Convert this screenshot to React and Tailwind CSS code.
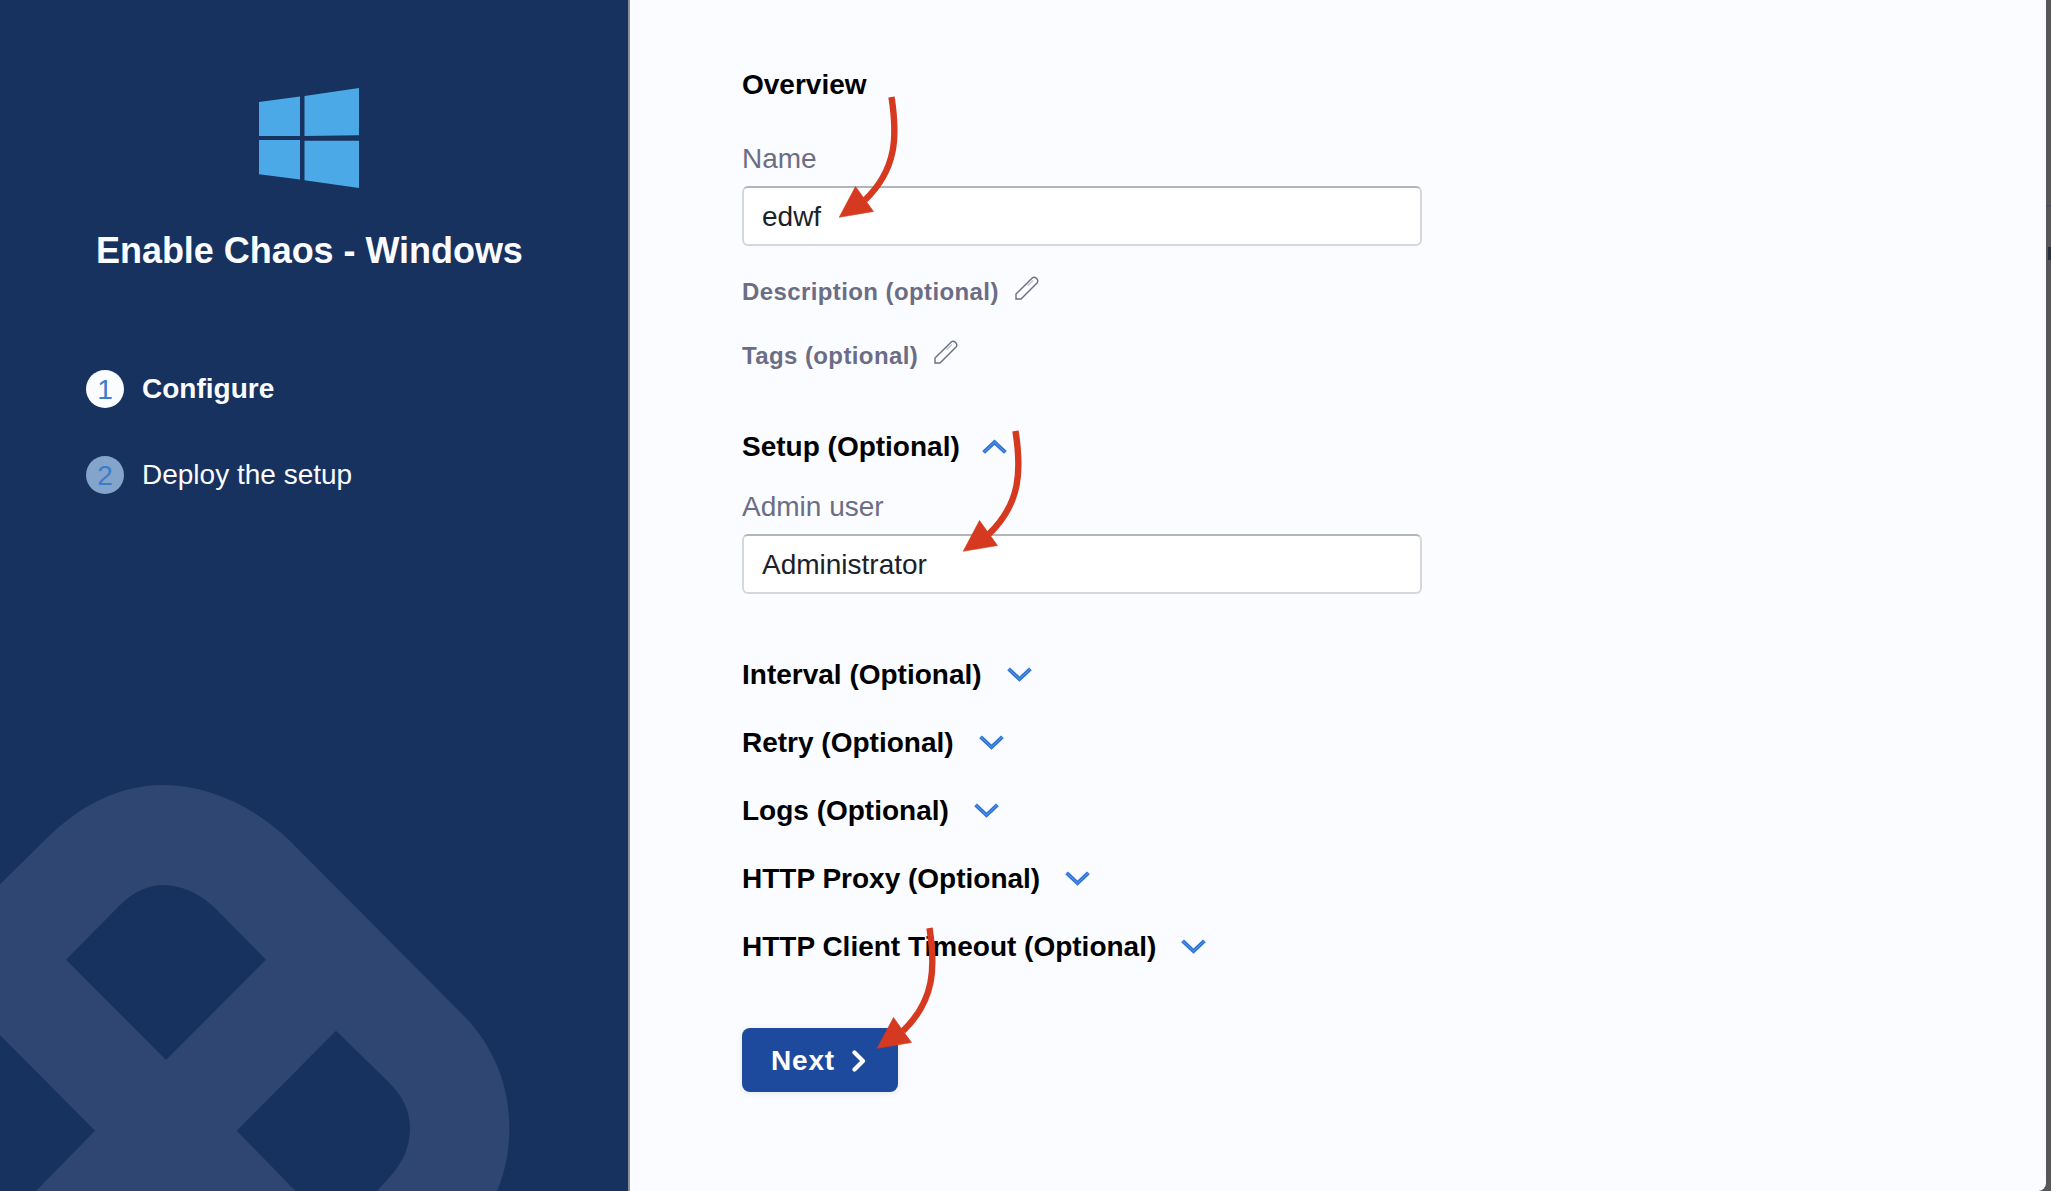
const ARROW_HEAD = "M-0.8 0.3 L15.500 -30.500 L33.500 -5.500 Z";

function Arrow({ className }) {
  return (
    <svg className={`absolute pointer-events-none ${className}`} width="70" height="130" viewBox="-5 -125 70 130" aria-hidden="true">
      <path d="M51.5 -120 C57.5 -81 57 -48 25 -17" fill="none" stroke="#d5391f" strokeWidth="6.400" />
      <path d={ARROW_HEAD} fill="#d5391f" stroke="#d5391f" strokeWidth="0.6" />
    </svg>
  );
}

function Chevron({ up, className = "" }) {
  const d = up ? "M1.6 13.4 L12.5 3.2 L23.4 13.4" : "M1.6 1.9 L12.5 12.1 L23.4 1.9";
  return (
    <svg width="25" height="15" viewBox="0 0 25 15" fill="none" className={className} aria-hidden="true">
      <path d={d} stroke="#2d74d6" strokeWidth="4" />
      <path d={d} stroke="#79a8ea" strokeWidth="0.7" />
    </svg>
  );
}

function Pencil() {
  return (
    <svg width="24" height="24" viewBox="0 0 24 24" fill="none" className="relative -top-[4px]" aria-hidden="true">
      <path d="M1 23 V18 L17 2.2 Q19 0.4 21 2 L22 3 Q23.6 5 22 7 L6 23 Z" stroke="#6b6d85" strokeWidth="1.4" />
      <path d="M12.5 9.5 L18 4.5" stroke="#c4c5d0" strokeWidth="1.6" />
    </svg>
  );
}

function WindowsLogo() {
  return (
    <svg width="100" height="100" viewBox="0 0 100 100" fill="#4ca9e8" className="ml-[259px] block" aria-hidden="true">
      <path d="M0 14 L41 8.6 V48 H0 Z" />
      <path d="M45.5 7.9 L100 0 V47.3 L45.5 48 Z" />
      <path d="M0 52 H41 V91.4 L0 86.2 Z" />
      <path d="M45.5 52.7 H100 V100 L45.5 92.2 Z" />
    </svg>
  );
}

function Watermark() {
  return (
    <svg className="absolute left-0 bottom-0" width="628" height="431" viewBox="0 760 628 431" aria-hidden="true">
      <path
        fill="#2f4672"
        fillRule="evenodd"
        d="M0 884.3 L45 840 C82 803 122 785 163 785 C205 785 252 804 290 841 L461 1013 C493 1044 509.4 1085 509.4 1128 C509.4 1150 505.500 1171 497 1191 H377 L388 1179 C403 1163 410 1147 410 1128 C410 1110 402 1095 388 1081.500 L336 1030.700 L236.700 1130.700 L295.500 1191 H36 L95 1130.700 L0 1035 Z M66 959.700 L120 905 C133 892 148 885 163 885 C181 885 200 893 216 909 L266 959.700 L166 1060 Z"
      />
    </svg>
  );
}

function Step({ number, label, active }) {
  return (
    <li className="flex h-[38px] items-center gap-[18px]">
      <span
        className={`flex size-[38px] items-center justify-center rounded-full pt-[2px] text-[28px] leading-none text-[#3d7bcb] ${
          active ? "bg-[#fbfcff]" : "bg-[#83a4cb]"
        }`}
      >
        {number}
      </span>
      <span className={`text-[28px] leading-[38px] text-[#fbfcff] ${active ? "font-bold" : ""}`}>{label}</span>
    </li>
  );
}

function TextField({ label, value }) {
  return (
    <label className="block">
      <span className="block text-[28px] leading-8 text-[#6b6d85]">{label}</span>
      <input
        defaultValue={value}
        className="mt-[11px] block h-[60px] w-[680px] rounded-[6px] border-2 border-[#d6d7d9] border-t-[#b4b5b8] bg-white px-[18px] pt-0.5 text-[28px] text-[#1c2128] outline-none"
      />
    </label>
  );
}

function OptionalRow({ label }) {
  return (
    <div className="flex h-8 items-center gap-4 text-[24px] font-bold leading-8 tracking-[0.4px] text-[#6b6d85]">
      {label}
      <Pencil />
    </div>
  );
}

const SECTIONS = [
  "Interval (Optional)",
  "Retry (Optional)",
  "Logs (Optional)",
  "HTTP Proxy (Optional)",
  "HTTP Client Timeout (Optional)",
];

export default function App() {
  return (
    <div className="relative flex h-[1191px] w-[2051px] overflow-hidden bg-[#555759] font-['Liberation_Sans',Arial,sans-serif]">
      <aside className="relative w-[630px] shrink-0 border-r-2 border-[#8f9095] bg-[#18325f] pt-[88px]">
        <Watermark />
        <WindowsLogo />
        <h1 className="ml-[96px] mt-[43px] text-[36px] font-bold leading-10 tracking-[-0.04px] whitespace-nowrap text-[#fbfcff]">
          Enable Chaos - Windows
        </h1>
        <ol className="relative ml-[86px] mt-[99px] flex flex-col gap-12">
          <Step number="1" label="Configure" active />
          <Step number="2" label="Deploy the setup" />
        </ol>
      </aside>

      <main className="w-[1416px] shrink-0 rounded-br-[8px] bg-[#fbfcff] pl-28 pt-[69px]">
        <h2 className="text-[28px] font-bold leading-8 text-black">Overview</h2>
        <div className="mt-[42px]">
          <TextField label="Name" value="edwf" />
        </div>
        <div className="mt-[30px] flex flex-col gap-8">
          <OptionalRow label="Description (optional)" />
          <OptionalRow label="Tags (optional)" />
        </div>

        <button className="mt-[59px] flex h-8 items-center gap-[22px] text-[28px] font-bold leading-8 text-black">
          Setup (Optional)
          <Chevron up className="relative -top-px" />
        </button>
        <div className="mt-7">
          <TextField label="Admin user" value="Administrator" />
        </div>

        <div className="mt-[65px] flex flex-col items-start gap-9">
          {SECTIONS.map((label) => (
            <button key={label} className="flex h-8 items-center gap-[25px] text-[28px] font-bold leading-8 text-black">
              {label}
              <Chevron className="relative -top-px" />
            </button>
          ))}
        </div>

        <button className="mt-[65px] flex h-16 w-[156px] items-center rounded-[8px] bg-[#1e4a9e] pl-[29px] pt-0.5 text-[28px] font-bold tracking-[0.8px] text-white shadow-[0_1px_6px_rgba(40,41,61,0.1)]">
          Next
          <svg width="14" height="22" viewBox="0 0 14 22" fill="none" className="ml-[17px]" aria-hidden="true">
            <path d="M2.500 2.500 L11 11 L2.500 19.500" stroke="#fff" strokeWidth="4.200" strokeLinecap="round" strokeLinejoin="round" />
          </svg>
        </button>
      </main>

      <div className="w-[5px] shrink-0 bg-[#555759] pt-[205px]">
        <div className="h-0.5 bg-[#4c5058]" />
        <div className="ml-0.5 mt-10 h-[13px] w-[3px] bg-[#2a303c]" />
      </div>

      <Arrow className="left-[835px] top-[92px]" />
      <Arrow className="left-[959px] top-[426px]" />
      <Arrow className="left-[873px] top-[923px]" />
    </div>
  );
}
